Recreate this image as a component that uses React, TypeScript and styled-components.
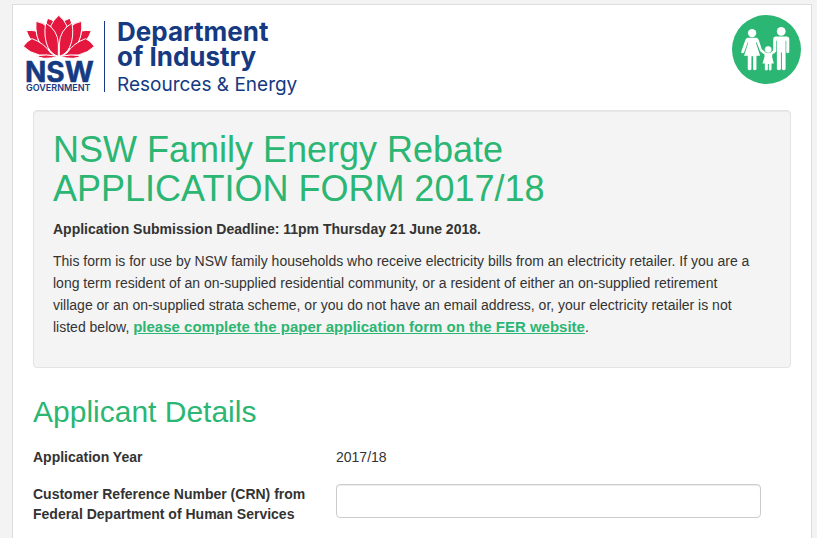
import React from "react";
import styled, { createGlobalStyle } from "styled-components";

const green = "#2bb673";
const navy = "#153a82";

const GlobalStyle = createGlobalStyle`
  *, *::before, *::after { box-sizing: border-box; }
  body {
    margin: 0;
    background: #f3f3f3;
    color: #333;
    font-family: "Liberation Sans", Arial, sans-serif;
    font-size: 14px;
    line-height: 20px;
  }
`;

const Sheet = styled.main`
  margin: 4px 5px 0 12px;
  padding: 10px 20px 0;
  min-height: calc(100vh - 4px);
  background: #fff;
  border: 1px solid #ddd;
  border-bottom: 0;
`;

const Header = styled.header`
  display: flex;
  justify-content: space-between;
  align-items: flex-start;
  margin: 0 -10px 13px;
`;

const Logo = styled.svg`
  display: block;
  width: 276px;
  height: 82px;
`;

const FamilyBadge = styled.svg`
  display: block;
  width: 69px;
  height: 69px;
`;

const Notice = styled.section`
  padding: 19px;
  background: #f4f4f4;
  border: 1px solid #e3e3e3;
  border-radius: 4px;
  box-shadow: inset 0 1px 1px rgba(0, 0, 0, 0.05);
`;

const Title = styled.h1`
  margin: 0 0 10px;
  color: ${green};
  font-size: 36px;
  font-weight: 400;
  line-height: 39px;
`;

const Text = styled.p`
  margin: 0 0 10px;
  line-height: 22px;
`;

const Link = styled.a`
  color: ${green};
  font-size: 15px;
  font-weight: 700;
  text-decoration: underline;
`;

const SectionTitle = styled.h2`
  margin: 27px 0 19px;
  color: ${green};
  font-size: 30px;
  font-weight: 400;
  line-height: 33px;
`;

const Field = styled.div`
  display: grid;
  grid-template-columns: 288px 1fr;
  column-gap: 15px;
  margin: 0 30px 0 0;

  & + & {
    margin-top: 17px;
  }
`;

const Label = styled.label`
  font-weight: 700;
`;

const Input = styled.input`
  width: 100%;
  height: 34px;
  padding: 6px 12px;
  color: #555;
  font: inherit;
  background: #fff;
  border: 1px solid #ccc;
  border-radius: 4px;
  box-shadow: inset 0 1px 1px rgba(0, 0, 0, 0.075);
`;

const halfLotus = (
  <>
    <path d="M143 55 Q158 59 165 68 L150 96 L136 76 Z" />
    <path d="M79 92 Q95 90 108 93 L118 130 L96 124 Q84 108 79 92 Z" />
    <path d="M108 64 Q130 68 142 81 L146 160 Q119 138 111 108 Q106 86 108 64 Z" />
    <path d="M70 139 Q82 122 96 116 Q131 128 153 160 Q164 165 165 167 L118 165 Q88 158 70 139 Z" />
    <path d="M109 167 Q139 162 174 169 Q156 176 133 175 Q119 174 109 167 Z" />
  </>
);

function DepartmentLogo() {
  return (
    <Logo viewBox="0 0 276 82" role="img" aria-label="NSW Government, Department of Industry, Resources & Energy">
      <g transform="scale(0.3333) translate(-69 -45)" fill="#e4173e" stroke="#fff" strokeWidth="3" strokeLinejoin="round">
        {halfLotus}
        <g transform="translate(353 0) scale(-1 1)">{halfLotus}</g>
        <path d="M176.500 46 Q193 60 201 78 L176.500 138 L152 78 Q160 60 176.500 46 Z" />
        <path d="M137 69 Q174 91 175 132 L175 169 Q155 163 144 142 Q130 111 137 69 Z" />
        <path d="M216 69 Q179 91 178 132 L178 169 Q198 163 209 142 Q223 111 216 69 Z" />
      </g>
      <rect x="81" y="6" width="1" height="71" fill={navy} />
      <g fill={navy} fontFamily="Inter, sans-serif">
        <text x="2" y="67" fontSize="28" fontWeight="700" stroke={navy} strokeWidth="0.5">NSW</text>
        <text x="3" y="76" fontSize="9" fontWeight="600">GOVERNMENT</text>
        <text x="94" y="26" fontSize="26" fontWeight="700">Department</text>
        <text x="94" y="51" fontSize="26" fontWeight="700">of Industry</text>
        <text x="94" y="76" fontSize="19" fontWeight="400">Resources &amp; Energy</text>
      </g>
    </Logo>
  );
}

function FamilyIcon() {
  return (
    <FamilyBadge viewBox="96 45 206 206" role="img" aria-label="Family">
      <circle cx="199" cy="148" r="103" fill={green} />
      <g fill="#fff">
        <circle cx="156" cy="99" r="12.500" />
        <path d="M143 113 H169 Q174 114 176 120 L185 147 L197 158 H211 L221 149 L226 154 L216 164 V171 L221 190 H214 V208 Q210 213 206 208 V191 H203 V208 Q199 213 194 208 V190 H187 L193 170 V163 L180 153 L169 125 L168 129 L180 167 H169 V207 Q164 213 159 207 V168 H154 V207 Q149 213 143 207 V167 H132 L144 129 V124 L132 157 Q128 162 123 156 L136 119 Q138 114 143 113 Z" />
        <circle cx="204" cy="148" r="10.500" stroke={green} strokeWidth="1" />
        <circle cx="243" cy="94" r="13" />
        <path d="M226 109 H260 Q267 110 267 117 V156 Q262 162 258 156 V122 H256 V207 Q250 213 245 207 V157 H242 V207 Q236 213 230 207 V122 H228 V154 L221 161 Q218 158 219 153 V117 Q219 110 226 109 Z" />
      </g>
    </FamilyBadge>
  );
}

export default function App() {
  return (
    <>
      <GlobalStyle />
      <Sheet>
        <Header>
          <DepartmentLogo />
          <FamilyIcon />
        </Header>
        <Notice>
          <Title>
            NSW Family Energy Rebate
            <br />
            APPLICATION FORM 2017/18
          </Title>
          <Text>
            <strong>Application Submission Deadline: 11pm Thursday 21 June 2018.</strong>
          </Text>
          <Text>
            This form is for use by NSW family households who receive electricity bills from an
            electricity retailer. If you are a
            <br />
            long term resident of an on-supplied residential community, or a resident of either an
            on-supplied retirement
            <br />
            village or an on-supplied strata scheme, or you do not have an email address, or, your
            electricity retailer is not
            <br />
            listed below,{" "}
            <Link href="#paper-form">please complete the paper application form on the FER website</Link>.
          </Text>
        </Notice>
        <form>
          <SectionTitle>Applicant Details</SectionTitle>
          <Field>
            <Label as="span">Application Year</Label>
            <span>2017/18</span>
          </Field>
          <Field>
            <Label htmlFor="crn">
              Customer Reference Number (CRN) from Federal Department of Human Services
            </Label>
            <Input id="crn" name="crn" type="text" />
          </Field>
        </form>
      </Sheet>
    </>
  );
}
